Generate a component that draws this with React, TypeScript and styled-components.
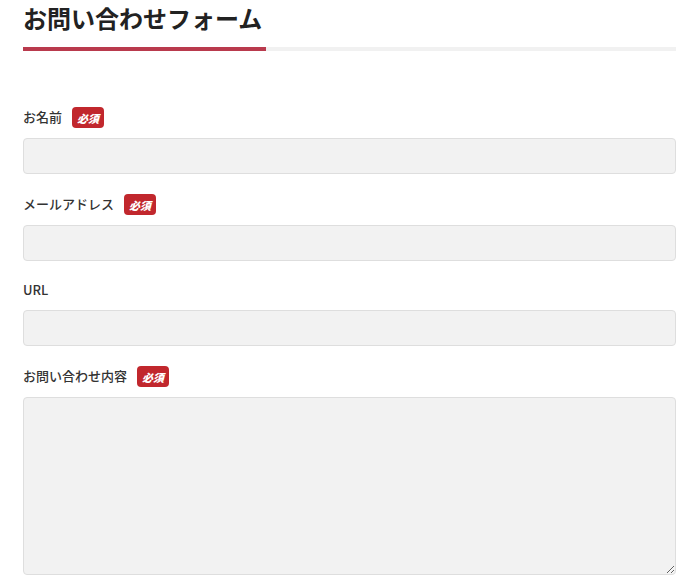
import React from 'react';
import styled, { createGlobalStyle } from 'styled-components';

const GlobalStyle = createGlobalStyle`
  html, body {
    margin: 0;
    padding: 0;
    background: #fff;
  }
  body {
    font-family: "Noto Sans CJK JP", "Noto Sans", sans-serif;
    color: #333;
  }
`;

const fields = [
  { label: 'お名前', required: true, multiline: false },
  { label: 'メールアドレス', required: true, multiline: false },
  { label: 'URL', required: false, multiline: false },
  { label: 'お問い合わせ内容', required: true, multiline: true },
];

export default function App() {
  return (
    <>
      <GlobalStyle />
      <Page>
        <Title>お問い合わせフォーム</Title>
        <TitleBar>
          <TitleAccent />
        </TitleBar>
        <Form>
          {fields.map((f) => (
            <Field key={f.label}>
              <LabelRow>
                <Label>{f.label}</Label>
                {f.required && <Badge>必須</Badge>}
              </LabelRow>
              {f.multiline ? <TextArea /> : <Input type="text" />}
            </Field>
          ))}
        </Form>
      </Page>
    </>
  );
}

const Page = styled.div`
  padding: 0 24px 0 23px;
`;

const Title = styled.h2`
  margin: 0;
  font-size: 24px;
  line-height: 36px;
  font-weight: 700;
  color: #222;
  letter-spacing: 0;
`;

const TitleBar = styled.div`
  margin-top: 11px;
  height: 4px;
  background: #f1f1f1;
  display: flex;
`;

const TitleAccent = styled.div`
  width: 243px;
  height: 100%;
  background: #b93a4d;
`;

const Form = styled.form`
  margin-top: 56px;
  display: flex;
  flex-direction: column;
  gap: 20px;
`;

const Field = styled.div`
  display: flex;
  flex-direction: column;
`;

const LabelRow = styled.div`
  display: flex;
  align-items: center;
  gap: 10px;
  min-height: 19px;
  margin-bottom: 10px;
`;

const Label = styled.span`
  font-size: 13px;
  line-height: 19px;
  font-weight: 500;
  color: #333;
  position: relative;
  top: -1px;
`;

const Badge = styled.span`
  display: inline-flex;
  align-items: center;
  justify-content: center;
  width: 32px;
  height: 21px;
  border-radius: 4px;
  background: #c1272d;
  color: #fff;
  font-size: 11px;
  font-weight: 900;
  font-style: italic;
`;

const Input = styled.input`
  box-sizing: border-box;
  width: 100%;
  height: 36px;
  margin: 0;
  border: 1px solid #dedede;
  border-radius: 4px;
  background: #f2f2f2;
  outline: none;
`;

const TextArea = styled.textarea`
  box-sizing: border-box;
  display: block;
  width: 100%;
  height: 178px;
  margin: 0;
  border: 1px solid #dedede;
  border-radius: 4px;
  background: #f2f2f2;
  outline: none;
`;
